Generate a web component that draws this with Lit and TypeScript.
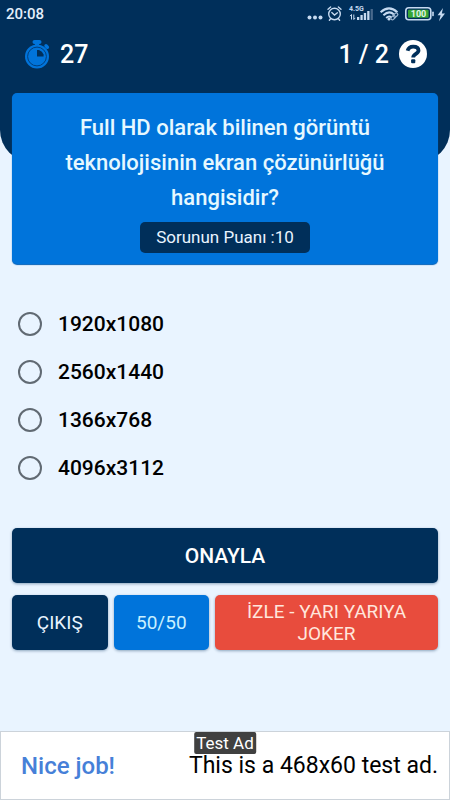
import { LitElement, html, css, svg } from "lit";
import { customElement, state } from "lit/decorators.js";

const stopwatch = html`<svg class="watch" viewBox="0 0 25 29" aria-hidden="true">
  <rect x="7.5" y="0" width="9" height="4" rx="2" fill="currentColor" />
  <rect x="10" y="2" width="4" height="5" fill="currentColor" />
  <path d="M21 5.8l1.4 1.4" stroke="currentColor" stroke-width="3.4" stroke-linecap="round" />
  <circle cx="12" cy="16.5" r="12" fill="currentColor" />
  <circle cx="12" cy="16.5" r="9.4" fill="none" stroke="#003f7c" stroke-width="1" />
  <path d="M12 10V16.5H18.6V14.5A7 7 0 0 0 14 10Z" fill="#002f5a" />
</svg>`;

const helpIcon = html`<svg class="help-icon" viewBox="0 0 28 28" aria-hidden="true">
  <circle cx="14" cy="14" r="14" fill="#fff" />
  <path d="M8.6 10.8C9.4 7.6 11.2 6.6 14.2 6.6C17.6 6.6 19.5 8.2 19.5 10.6C19.5 14 14.2 13.8 14.2 17.4" fill="none" stroke="#002f5a" stroke-width="3.8" />
  <rect x="12.1" y="19.2" width="4.2" height="4" rx="1" fill="#002f5a" />
</svg>`;

const bars = [3, 5, 7, 9, 11];

const statusIcons = html`<svg class="status-icons" viewBox="0 0 142 20" role="img" aria-label="Alarm, 4.5G, Wi-Fi, 100">
  <g fill="#c6daf0">
    <circle cx="3.5" cy="13.5" r="2" /><circle cx="9" cy="13.5" r="2" /><circle cx="14.5" cy="13.5" r="2" />
  </g>
  <g fill="none" stroke="#c6daf0" stroke-width="1.4" stroke-linecap="round">
    <circle cx="28.5" cy="10" r="5.8" />
    <path d="M25.8 8.6l2.7 2.4l2.9-2.2M22 5.2l2.6-2.2M35 5.2l-2.6-2.2M24.6 14.8l-1.2 1.4M32.4 14.8l1.2 1.4" />
  </g>
  <text x="43" y="7" class="net">4.5G</text>
  <path d="M45.5 15.5v-5l-1.4 1.6M47.8 10.5v5l1.4-1.6" fill="none" stroke="#c6daf0" stroke-width="1" />
  ${bars.map(
    (h, i) => svg`<rect x=${51 + i * 3.4} y=${16 - h} width="2.3" height=${h} fill=${i === 4 ? "#48698c" : "#c6daf0"} />`
  )}
  <g fill="none" stroke="#c6daf0" stroke-width="2">
    <path d="M74.6 8.2Q83 0.6 91.4 8.2" />
    <path d="M77.4 11.2Q83 6 88 10.4" />
    <path d="M80.2 14Q83 11.4 85.4 13.4" />
  </g>
  <circle cx="83" cy="15.2" r="1.4" fill="#c6daf0" />
  <g fill="none" stroke="#9db7d3" stroke-width="1.2">
    <rect x="84.6" y="12.2" width="5" height="3" rx="1.5" transform="rotate(-45 87 13.6)" />
    <rect x="87" y="9.6" width="5" height="3" rx="1.5" transform="rotate(-45 89.6 11)" />
  </g>
  <rect x="99.8" y="3.8" width="25" height="12" rx="3" fill="none" stroke="#c6daf0" stroke-width="1.6" />
  <rect x="102" y="5.8" width="20.6" height="8" rx="1" fill="#36a634" />
  <rect x="126.2" y="7.4" width="1.6" height="4.8" rx="0.8" fill="#c6daf0" />
  <text x="112.5" y="13" text-anchor="middle" class="charge">100</text>
  <path d="M137 4L131.6 11.2H134.6L133 17.2L139 9.6H135.8Z" fill="#c6daf0" />
</svg>`;

@customElement("app-root")
export class AppRoot extends LitElement {
  @state() private choice = "";

  private options = ["1920x1080", "2560x1440", "1366x768", "4096x3112"];

  static styles = css`
    :host {
      display: flex;
      flex-direction: column;
      min-height: 100vh;
      background: #e9f4ff;
      color: #000;
      font-family: Roboto, "Noto Sans", sans-serif;
    }
    * {
      box-sizing: border-box;
    }
    .header {
      background: #002f5a;
      color: #fff;
      padding-bottom: 69px;
      border-radius: 0 0 32px 32px;
    }
    .status {
      display: flex;
      align-items: center;
      justify-content: space-between;
      height: 28px;
      padding: 0 2px 0 6px;
      font-size: 15px;
      font-weight: 500;
      color: #e3eefa;
    }
    .status-icons {
      width: 142px;
      height: 20px;
    }
    .net {
      font: 700 7px Roboto, sans-serif;
      fill: #c6daf0;
    }
    .charge {
      font: 700 9px Roboto, sans-serif;
      fill: #e3f4e8;
    }
    .bar {
      display: flex;
      align-items: center;
      justify-content: space-between;
      height: 65px;
      padding: 0 23px 13px 25px;
      font-size: 25px;
      font-weight: 500;
    }
    .timer,
    .progress {
      display: flex;
      align-items: center;
      gap: 10px;
    }
    .watch {
      width: 25px;
      height: 29px;
      color: #0074db;
    }
    .help {
      display: flex;
      padding: 0;
      border: 0;
      background: none;
    }
    .help-icon {
      width: 28px;
      height: 28px;
    }
    .main {
      flex: 1;
      margin-top: -69px;
      padding: 0 12px 24px;
    }
    .card {
      display: flex;
      flex-direction: column;
      align-items: center;
      padding: 17px 40px 11px;
      border-radius: 5px;
      background: #0074db;
      box-shadow: 0 1px 1px #0060b8;
      text-align: center;
    }
    .question {
      margin: 0 0 7px;
      color: #e6f8ff;
      font-size: 22px;
      font-weight: 500;
      line-height: 35px;
    }
    .points {
      padding: 0 16px;
      border-radius: 5px;
      background: #002f5a;
      color: #e9f4ff;
      font-size: 17px;
      line-height: 31px;
    }
    .options {
      margin: 36px 0;
      padding: 0;
      border: 0;
    }
    .option {
      display: flex;
      align-items: center;
      gap: 16px;
      height: 48px;
      padding-left: 6px;
      font-size: 21px;
      font-weight: 500;
    }
    .radio {
      appearance: none;
      width: 24px;
      height: 24px;
      margin: 0;
      border: 2px solid #616a73;
      border-radius: 50%;
    }
    .radio:checked {
      background: radial-gradient(#0074db 45%, transparent 50%);
    }
    .button {
      width: 100%;
      min-height: 55px;
      padding: 0 24px;
      border: 0;
      border-radius: 5px;
      background: #002f5a;
      box-shadow: 0 1px 3px #002f5a66;
      color: #e9f4ff;
      font-family: inherit;
      font-size: 19px;
      line-height: 22px;
    }
    .confirm {
      color: #fff;
      font-size: 21px;
      font-weight: 500;
    }
    .actions {
      display: grid;
      grid-template-columns: 3fr 3fr 7fr;
      gap: 6px;
      margin-top: 12px;
    }
    .half {
      background: #0074db;
      color: #c8f0ff;
    }
    .joker {
      background: #e84c3d;
      color: #ffe6dc;
    }
    .half,
    .exit {
      padding: 0;
    }
    .ad {
      position: relative;
      display: flex;
      align-items: center;
      justify-content: space-between;
      height: 69px;
      padding: 0 11px 0 20px;
      border: 1px solid #ccd3da;
      background: #fff;
      font-size: 23px;
    }
    .ad-link {
      color: #4680d8;
      font-size: 24px;
      font-weight: 500;
      text-decoration: none;
    }
    .ad-tag {
      position: absolute;
      top: 0;
      left: 50%;
      transform: translateX(-50%);
      padding: 0 2px;
      border-radius: 2px;
      background: #404040;
      color: #fff;
      font-size: 17px;
      line-height: 22px;
      white-space: nowrap;
    }
  `;

  render() {
    return html`
      <header class="header">
        <div class="status"><span>20:08</span>${statusIcons}</div>
        <div class="bar">
          <div class="timer">${stopwatch}<span>27</span></div>
          <div class="progress">
            <span>1 / 2</span>
            <button class="help" aria-label="Yardım">${helpIcon}</button>
          </div>
        </div>
      </header>
      <main class="main">
        <section class="card">
          <h1 class="question" id="question">
            Full HD olarak bilinen görüntü teknolojisinin ekran çözünürlüğü hangisidir?
          </h1>
          <div class="points">Sorunun Puanı :10</div>
        </section>
        <fieldset class="options" aria-labelledby="question">
          ${this.options.map(
            (o) => html`<label class="option">
              <input
                class="radio"
                type="radio"
                name="answer"
                .checked=${this.choice === o}
                @change=${() => (this.choice = o)}
              />
              <span>${o}</span>
            </label>`
          )}
        </fieldset>
        <button class="button confirm">ONAYLA</button>
        <div class="actions">
          <button class="button exit">ÇIKIŞ</button>
          <button class="button half">50/50</button>
          <button class="button joker">İZLE - YARI YARIYA JOKER</button>
        </div>
      </main>
      <aside class="ad">
        <a class="ad-link" href="#">Nice job!</a>
        <span>This is a 468x60 test ad.</span>
        <span class="ad-tag">Test Ad</span>
      </aside>
    `;
  }
}
